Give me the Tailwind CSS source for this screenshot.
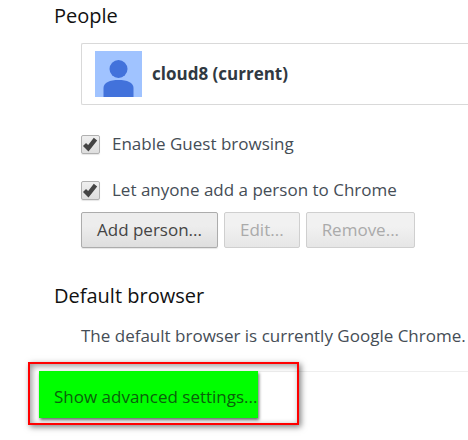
<!DOCTYPE html>
<html lang="en">
<head>
  <meta charset="utf-8">
  <meta name="viewport" content="width=device-width, initial-scale=1">
  <title>Settings</title>
  <script src="https://cdn.jsdelivr.net/npm/@tailwindcss/browser@4"></script>
</head>
<body class="min-h-screen overflow-x-hidden bg-white font-['Open_Sans','Noto_Sans',sans-serif] text-[17px] leading-6 text-[#454d56]">
  <main class="pb-4 pl-[54px] whitespace-nowrap">

    <!-- People -->
    <section>
      <h2 class="text-xl leading-8 text-[#111]">People</h2>
      <div class="pl-[27px]">
        <div class="mt-[11px] flex items-center gap-[10px] rounded-l-xs border border-r-0 border-[#d9d9d9] py-[7px] pl-[13px]">
          <svg class="h-[46px] w-[47px]" viewBox="0 0 47 46" aria-hidden="true">
            <rect width="47" height="46" fill="#a0c3ff"/>
            <circle cx="23.5" cy="18" r="9" fill="#4272db"/>
            <path d="M8.500 46V37C8.500 31.500 15 29 23.500 29S38.500 31.500 38.500 37V46Z" fill="#4272db"/>
          </svg>
          <span class="font-bold text-[#303942]">cloud8 (current)</span>
        </div>

        <div class="mt-[27px] flex flex-col gap-[22px]">
          <label class="flex items-center gap-3">
            <span class="relative flex">
              <input type="checkbox" checked class="peer size-[19px] appearance-none rounded-xs border border-[#b0b0b0] bg-linear-to-b from-[#efefef] to-[#dedede] shadow-[0_1px_1px_rgba(0,0,0,0.1)]">
              <svg class="pointer-events-none absolute inset-0 hidden size-[19px] peer-checked:block" viewBox="0 0 19 19" aria-hidden="true">
                <path d="M3.500 9.500L7.300 13.300L14.500 4.200" fill="none" stroke="#444" stroke-width="4.300"/>
              </svg>
            </span>
            Enable Guest browsing
          </label>
          <label class="flex items-center gap-3">
            <span class="relative flex">
              <input type="checkbox" checked class="peer size-[19px] appearance-none rounded-xs border border-[#b0b0b0] bg-linear-to-b from-[#efefef] to-[#dedede] shadow-[0_1px_1px_rgba(0,0,0,0.1)]">
              <svg class="pointer-events-none absolute inset-0 hidden size-[19px] peer-checked:block" viewBox="0 0 19 19" aria-hidden="true">
                <path d="M3.500 9.500L7.300 13.300L14.500 4.200" fill="none" stroke="#444" stroke-width="4.300"/>
              </svg>
            </span>
            Let anyone add a person to Chrome
          </label>
        </div>

        <div class="mt-[10px] flex gap-[6px]">
          <button class="h-9 rounded-xs border border-[#acacac] bg-linear-to-b from-[#ededed] from-38% to-[#dedede] px-[15px] text-[#444] shadow-[0_1px_1px_rgba(0,0,0,0.1)]">Add person...</button>
          <button disabled class="h-9 rounded-xs border border-[#cfcfcf] bg-linear-to-b from-[#f1f1f1] from-38% to-[#e6e6e6] px-[15px] text-[#aaa]">Edit...</button>
          <button disabled class="h-9 rounded-xs border border-[#cfcfcf] bg-linear-to-b from-[#f1f1f1] from-38% to-[#e6e6e6] px-[15px] text-[#aaa]">Remove...</button>
        </div>
      </div>
    </section>

    <!-- Default browser -->
    <section class="mt-8">
      <h2 class="text-xl leading-8 text-[#111]">Default browser</h2>
      <p class="mt-3 pl-[27px]">The default browser is currently Google Chrome.</p>
    </section>

    <!-- Advanced settings -->
    <div class="mt-[23px] border-t border-[#eee]">
      <div class="relative -mt-px -ml-[15px] w-fit">
        <button class="h-[47px] bg-[#00ff00] pt-1 pl-[15px] text-[#0b5f0b] shadow-[1px_2px_3px_rgba(0,0,0,0.6)]">Show advanced settings...</button>
        <div class="pointer-events-none absolute -top-[9px] -right-[41px] -bottom-[7px] -left-[11px] border-2 border-[#f00] shadow-[2px_2px_6px_rgba(0,0,0,0.5),inset_2px_2px_6px_rgba(0,0,0,0.4)]"></div>
      </div>
    </div>

  </main>
</body>
</html>
